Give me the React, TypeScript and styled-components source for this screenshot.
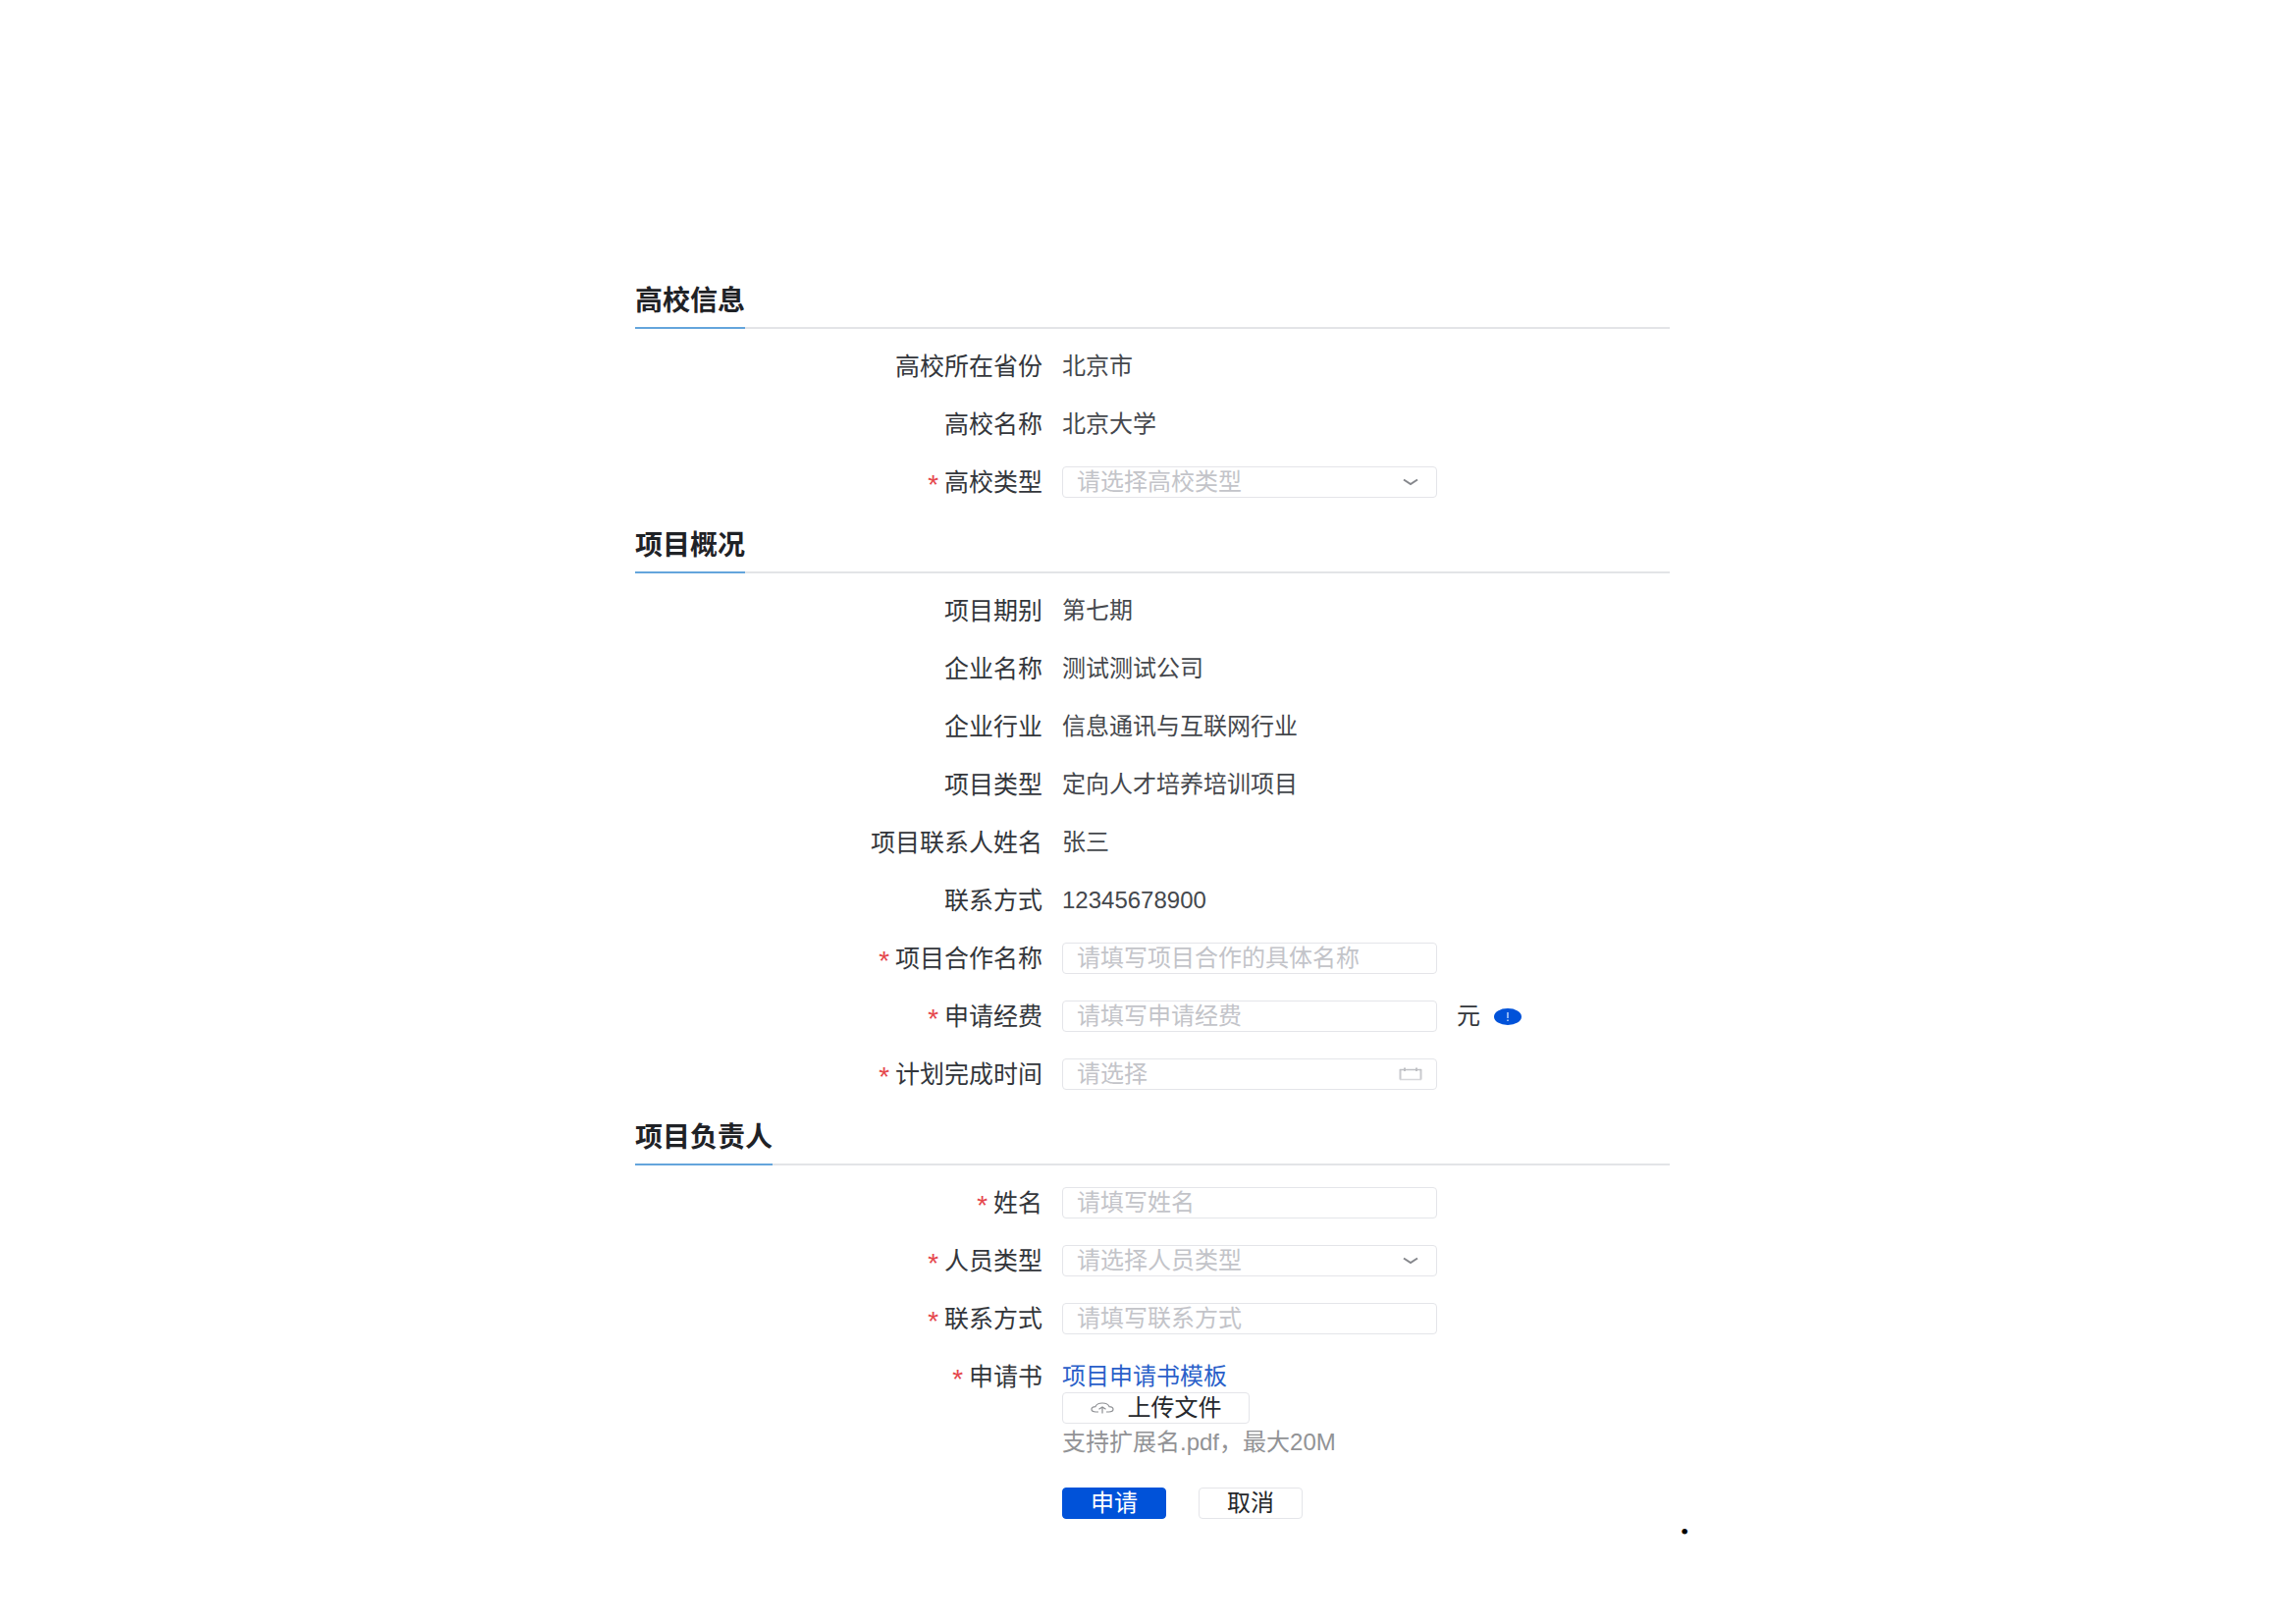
import React, { ReactNode } from "react";
import styled, { createGlobalStyle, css } from "styled-components";

const GlobalStyle = createGlobalStyle`
  *, *::before, *::after { box-sizing: border-box; }
  body { margin: 0; background: #fff; }
  body, input, select, button {
    font-family: "Liberation Sans", "Noto Sans CJK SC", sans-serif;
  }
`;

const Page = styled.main`
  display: grid;
  grid-template-columns: 647fr 1054fr 638fr;
  padding: 289px 0 80px;
  color: #33363b;
  font-size: 24px;
  line-height: 32px;
`;

const Form = styled.form`
  grid-column: 2;
  display: flex;
  flex-direction: column;
  gap: 31px;
  padding-bottom: 21px;
`;

const Section = styled.section`
  display: flex;
  flex-direction: column;
`;

const SectionHeader = styled.header`
  display: flex;
  height: 46px;
  border-bottom: 2px solid #e3e4e7;
  margin-bottom: 22px;
`;

const SectionTitle = styled.h2`
  margin: 0 0 -2px;
  border-bottom: 2px solid #64a5dc;
  color: #1f2226;
  font-size: 28px;
  line-height: 36px;
  font-weight: 700;
`;

const Rows = styled.div`
  display: flex;
  flex-direction: column;
  gap: 27px;
`;

const RowBox = styled.div`
  display: grid;
  grid-template-columns: 415px minmax(0, 1fr);
  column-gap: 20px;
  align-items: start;
`;

const labelStyle = css`
  display: flex;
  justify-content: flex-end;
  gap: 3px;
  height: 32px;
  font-size: 25px;
  white-space: nowrap;
`;

const Label = styled.label`
  ${labelStyle}
`;

const LabelText = styled.span`
  ${labelStyle}
`;

const Star = styled.span`
  padding-top: 6px;
  color: #e5484d;
  font-family: "Liberation Mono", monospace;
  font-size: 28px;
`;

const Value = styled.span`
  color: #45484d;
`;

const FieldLine = styled.div`
  display: flex;
  align-items: center;
  gap: 14px;
`;

const Unit = styled.span`
  padding-left: 6px;
`;

const Control = styled.div`
  display: grid;
  align-items: center;
  width: 382px;
  height: 32px;

  > * {
    grid-area: 1 / 1;
  }

  > svg {
    justify-self: end;
    pointer-events: none;
  }
`;

const controlStyle = css`
  width: 100%;
  height: 32px;
  padding: 0 14px;
  border: 1px solid #e4e5e9;
  border-radius: 4px;
  background: #fff;
  font-size: 24px;
  line-height: 30px;
  outline-color: #0052d9;
`;

const Input = styled.input`
  ${controlStyle}
  color: #33363b;

  &::placeholder {
    color: #c3c4c9;
    opacity: 1;
  }
`;

const Select = styled.select`
  ${controlStyle}
  appearance: none;
  color: #c3c4c9;
`;

const ChevronSvg = styled.svg`
  width: 18px;
  height: 8px;
  margin-right: 18px;
`;

const CalendarSvg = styled.svg`
  width: 24px;
  height: 14px;
  margin-right: 15px;
`;

const InfoSvg = styled.svg`
  width: 28px;
  height: 17px;
`;

const CloudSvg = styled.svg`
  width: 24px;
  height: 12px;
`;

const Stack = styled.div`
  display: flex;
  flex-direction: column;
  align-items: flex-start;
`;

const TemplateLink = styled.a`
  color: #2a5fc9;
  text-decoration: none;
`;

const Hint = styled.span`
  color: #929396;
  line-height: 38px;
`;

const Actions = styled.div`
  grid-column: 2;
  display: flex;
  gap: 33px;
`;

const Button = styled.button<{ $primary?: boolean; $wide?: boolean }>`
  display: flex;
  align-items: center;
  justify-content: center;
  gap: 14px;
  min-width: ${(p) => (p.$wide ? "191px" : "106px")};
  height: 32px;
  padding: 0;
  border: 1px solid ${(p) => (p.$primary ? "#0052d9" : "#e4e5e9")};
  border-radius: 4px;
  background: ${(p) => (p.$primary ? "#0052d9" : "#fff")};
  color: ${(p) => (p.$primary ? "#fff" : "#26282c")};
  font-size: 24px;
  line-height: 30px;
  cursor: pointer;
`;

const Bullet = styled.span`
  grid-column: 3;
  align-self: end;
  padding-left: 11px;
  color: #000;
  font-family: "Liberation Serif", serif;
  line-height: 16px;
`;

const Chevron = () => (
  <ChevronSvg viewBox="0 0 18 8" fill="none" aria-hidden="true">
    <path d="M2 1.5 9 6l7-4.5" stroke="#85878c" strokeWidth="2" />
  </ChevronSvg>
);

const Calendar = () => (
  <CalendarSvg viewBox="0 0 24 14" fill="none" aria-hidden="true">
    <path d="M1.500 2v10.500M22.500 2v10.500" stroke="#c9cace" strokeWidth="2" />
    <path d="M1 2.500h22" stroke="#bfc0c4" strokeWidth="1.500" />
    <path d="M1 12.500h22" stroke="#d6d7da" strokeWidth="1.500" />
    <path d="M6 .5v3.500M18 .5v3.500" stroke="#bfc0c4" strokeWidth="2" />
  </CalendarSvg>
);

const Info = () => (
  <InfoSvg viewBox="0 0 28 17" role="img" aria-label="说明">
    <ellipse cx="14" cy="8.5" rx="14" ry="8.5" fill="#0052d9" />
    <path d="M14 4v6M14 11.5v1.5" stroke="#8db4f2" strokeWidth="2" />
  </InfoSvg>
);

const Cloud = () => (
  <CloudSvg viewBox="0 0 24 12" fill="none" aria-hidden="true">
    <path
      d="M8 10H5.5C2.8 10 1 8.900 1 7.300 1 5.700 2.800 4.700 5 4.600 6 2.200 8.700 1 12 1s6 1.200 7 3.600c2.200.1 4 1.100 4 2.700S21.200 10 18.500 10H16"
      stroke="#8d8f93"
      strokeWidth="1.200"
    />
    <path d="M12 11.500V5M8.500 7.200 12 5l3.500 2.200" stroke="#8d8f93" strokeWidth="1.200" />
  </CloudSvg>
);

interface RowProps {
  label: string;
  htmlFor?: string;
  required?: boolean;
  children: ReactNode;
}

const Row = ({ label, htmlFor, required, children }: RowProps) => {
  const content = (
    <>
      {required && <Star>*</Star>}
      <span>{label}</span>
    </>
  );
  return (
    <RowBox>
      {htmlFor ? <Label htmlFor={htmlFor}>{content}</Label> : <LabelText>{content}</LabelText>}
      {children}
    </RowBox>
  );
};

interface FieldProps {
  id: string;
  label: string;
  placeholder: string;
  icon?: ReactNode;
  after?: ReactNode;
}

const TextField = ({ id, label, placeholder, icon, after }: FieldProps) => (
  <Row label={label} htmlFor={id} required>
    <FieldLine>
      <Control>
        <Input id={id} name={id} type="text" placeholder={placeholder} />
        {icon}
      </Control>
      {after}
    </FieldLine>
  </Row>
);

const SelectField = ({ id, label, placeholder }: FieldProps) => (
  <Row label={label} htmlFor={id} required>
    <Control>
      <Select id={id} name={id} defaultValue="">
        <option value="">{placeholder}</option>
      </Select>
      <Chevron />
    </Control>
  </Row>
);

const Group = ({ title, children }: { title: string; children: ReactNode }) => (
  <Section>
    <SectionHeader>
      <SectionTitle>{title}</SectionTitle>
    </SectionHeader>
    <Rows>{children}</Rows>
  </Section>
);

const school = [
  ["高校所在省份", "北京市"],
  ["高校名称", "北京大学"],
];

const project = [
  ["项目期别", "第七期"],
  ["企业名称", "测试测试公司"],
  ["企业行业", "信息通讯与互联网行业"],
  ["项目类型", "定向人才培养培训项目"],
  ["项目联系人姓名", "张三"],
  ["联系方式", "12345678900"],
];

const StaticRows = ({ items }: { items: string[][] }) => (
  <>
    {items.map(([label, value]) => (
      <Row key={label} label={label}>
        <Value>{value}</Value>
      </Row>
    ))}
  </>
);

export default function App() {
  return (
    <>
      <GlobalStyle />
      <Page>
        <Form onSubmit={(e) => e.preventDefault()}>
          <Group title="高校信息">
            <StaticRows items={school} />
            <SelectField id="schoolType" label="高校类型" placeholder="请选择高校类型" />
          </Group>

          <Group title="项目概况">
            <StaticRows items={project} />
            <TextField id="projectName" label="项目合作名称" placeholder="请填写项目合作的具体名称" />
            <TextField
              id="budget"
              label="申请经费"
              placeholder="请填写申请经费"
              after={
                <>
                  <Unit>元</Unit>
                  <Info />
                </>
              }
            />
            <TextField id="finishDate" label="计划完成时间" placeholder="请选择" icon={<Calendar />} />
          </Group>

          <Group title="项目负责人">
            <TextField id="leaderName" label="姓名" placeholder="请填写姓名" />
            <SelectField id="leaderType" label="人员类型" placeholder="请选择人员类型" />
            <TextField id="leaderPhone" label="联系方式" placeholder="请填写联系方式" />
            <Row label="申请书" htmlFor="applicationFile" required>
              <Stack>
                <TemplateLink href="#template">项目申请书模板</TemplateLink>
                <Button id="applicationFile" type="button" $wide>
                  <Cloud />
                  <span>上传文件</span>
                </Button>
                <Hint>支持扩展名.pdf，最大20M</Hint>
              </Stack>
            </Row>
            <RowBox>
              <Actions>
                <Button type="submit" $primary>
                  申请
                </Button>
                <Button type="button">取消</Button>
              </Actions>
            </RowBox>
          </Group>
        </Form>
        <Bullet>•</Bullet>
      </Page>
    </>
  );
}
